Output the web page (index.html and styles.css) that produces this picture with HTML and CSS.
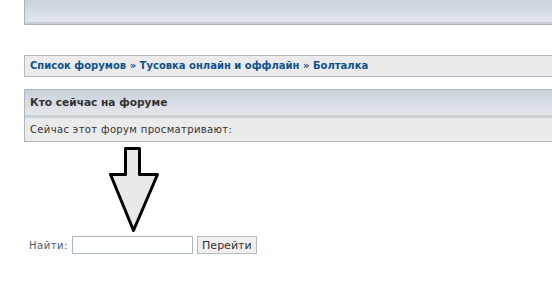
FILE: index.html
```html
<!DOCTYPE html>
<html lang="ru">
<head>
<meta charset="utf-8">
<link rel="stylesheet" href="styles.css">
</head>
<body>
<div class="page">
  <div class="topbar">
    <div class="grad"></div>
    <div class="strip"></div>
  </div>

  <div class="crumbs">
    <a href="#">Список форумов</a> <span class="sep">»</span> <a href="#">Тусовка онлайн и оффлайн</a> <span class="sep">»</span> <a href="#">Болталка</a>
  </div>

  <div class="online">
    <div class="online-head">Кто сейчас на форуме</div>
    <div class="strip"></div>
    <div class="online-body">Сейчас этот форум просматривают:</div>
  </div>

  <div class="arrow-wrap">
    <svg class="arrow" width="56" height="90" viewBox="0 0 56 90">
      <path d="M16.5 2.5 H30.5 V28.5 H48.5 L24.5 84.5 L1.5 28.5 H16.5 Z" fill="#e9e9e9" stroke="#000" stroke-width="3" stroke-linejoin="round"/>
    </svg>
  </div>

  <form class="jump">
    <label class="jump-label">Найти:</label>
    <input class="jump-input" type="text">
    <button class="jump-btn" type="button">Перейти</button>
  </form>
</div>
</body>
</html>
```

FILE: styles.css
```css
html, body {
  margin: 0;
  padding: 0;
  background: #fff;
}
.page {
  padding-left: 24px;
  overflow: hidden;
  font-family: "DejaVu Sans", Verdana, sans-serif;
  color: #333;
}
.topbar {
  border-left: 1px solid #a9b1b9;
  border-bottom: 1px solid #a7b0b9;
}
.topbar .grad {
  height: 22px;
  background: linear-gradient(#c9d1da, #e3e7eb);
}
.strip {
  height: 2px;
  background: #c7cfd7;
}
.crumbs {
  margin-top: 30px;
  height: 20px;
  line-height: 20px;
  border-top: 1px solid #b1b7bd;
  border-bottom: 1px solid #a9b7c4;
  border-left: 1px solid #b1b7bd;
  background: #ebebeb;
  padding-left: 5px;
  font-size: 10px;
  font-weight: bold;
  white-space: nowrap;
}
.crumbs a {
  color: #105289;
  text-decoration: none;
}
.crumbs .sep {
  color: #105289;
}
.online {
  margin-top: 12px;
  border-top: 1px solid #b1b7bd;
  border-left: 1px solid #b1b7bd;
  border-bottom: 1px solid #b1b7bd;
}
.online-head {
  height: 25px;
  line-height: 25px;
  padding-left: 5px;
  background: linear-gradient(#c9d1da, #e3e7eb);
  font-size: 10.6px;
  font-weight: bold;
  color: #333;
  white-space: nowrap;
}
.online .strip {
  height: 3px;
}
.online-body {
  height: 23px;
  line-height: 23px;
  padding-left: 5px;
  background: #ebebeb;
  font-size: 10px;
  letter-spacing: 0.35px;
  color: #333;
  white-space: nowrap;
}
.arrow-wrap {
  box-sizing: border-box;
  height: 94px;
  padding: 4px 0 0 85px;
}
.arrow {
  display: block;
}
.jump {
  margin: 0;
  padding-left: 5px;
  display: flex;
  align-items: center;
  height: 18px;
}
.jump-label {
  font-size: 10px;
  color: #4b5670;
  letter-spacing: 0.5px;
  margin-right: 4px;
}
.jump-input {
  box-sizing: border-box;
  width: 121px;
  height: 18px;
  border: 1px solid #a9b8c2;
  margin: 0 4px 0 0;
  padding: 0;
  background: #fff;
}
.jump-btn {
  box-sizing: border-box;
  width: 60px;
  height: 18px;
  border: 1px solid #b4bac0;
  background: #efefef;
  font-family: "DejaVu Sans", Verdana, sans-serif;
  font-size: 11px;
  color: #333;
  padding: 0;
  margin: 0;
}
```
